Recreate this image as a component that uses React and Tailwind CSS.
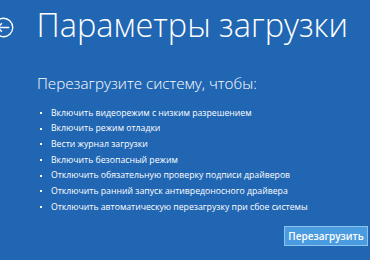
import React from 'react';

const items = [
  'Включить видеорежим с низким разрешением',
  'Включить режим отладки',
  'Вести журнал загрузки',
  'Включить безопасный режим',
  'Отключить обязательную проверку подписи драйверов',
  'Отключить ранний запуск антивредоносного драйвера',
  'Отключить автоматическую перезагрузку при сбое системы',
];

export default function App() {
  return (
    <div className="w-[370px] h-[260px] bg-[#2166b3] text-white overflow-hidden font-['Open_Sans',sans-serif] flex flex-col">
      {/* Header */}
      <div className="flex items-center h-[50px] pt-[4px]">
        <svg viewBox="0 0 20 20" className="w-[21px] h-[21px] ml-[-7.5px] shrink-0" fill="none" stroke="white" strokeWidth="1.3">
          <circle cx="10" cy="10" r="8.8" />
          <path d="M4.5 10h11M8.5 6l-4 4 4 4" />
        </svg>
        <h1 className="ml-[23px] mt-[-3px] text-[32.5px] font-light leading-none">Параметры загрузки</h1>
      </div>

      <div className="pl-[37px] pr-2 mt-[26px]">
        <p className="text-[15.2px] font-light leading-none">Перезагрузите систему, чтобы:</p>
        <ul className="mt-[14px] flex flex-col">
          {items.map((t) => (
            <li key={t} className="flex items-center h-[15.7px] text-[8.7px] leading-none">
              <span className="w-[2px] h-[2px] bg-white ml-[3px] mr-[9px] shrink-0" />
              <span>{t}</span>
            </li>
          ))}
        </ul>
      </div>

      <div className="flex justify-end pr-[2px] mt-[11px]">
        <button className="w-[84px] h-[20px] bg-[#4a9be0] border border-[#8dc4ee] text-[10px] font-semibold leading-none text-white">
          Перезагрузить
        </button>
      </div>
    </div>
  );
}
